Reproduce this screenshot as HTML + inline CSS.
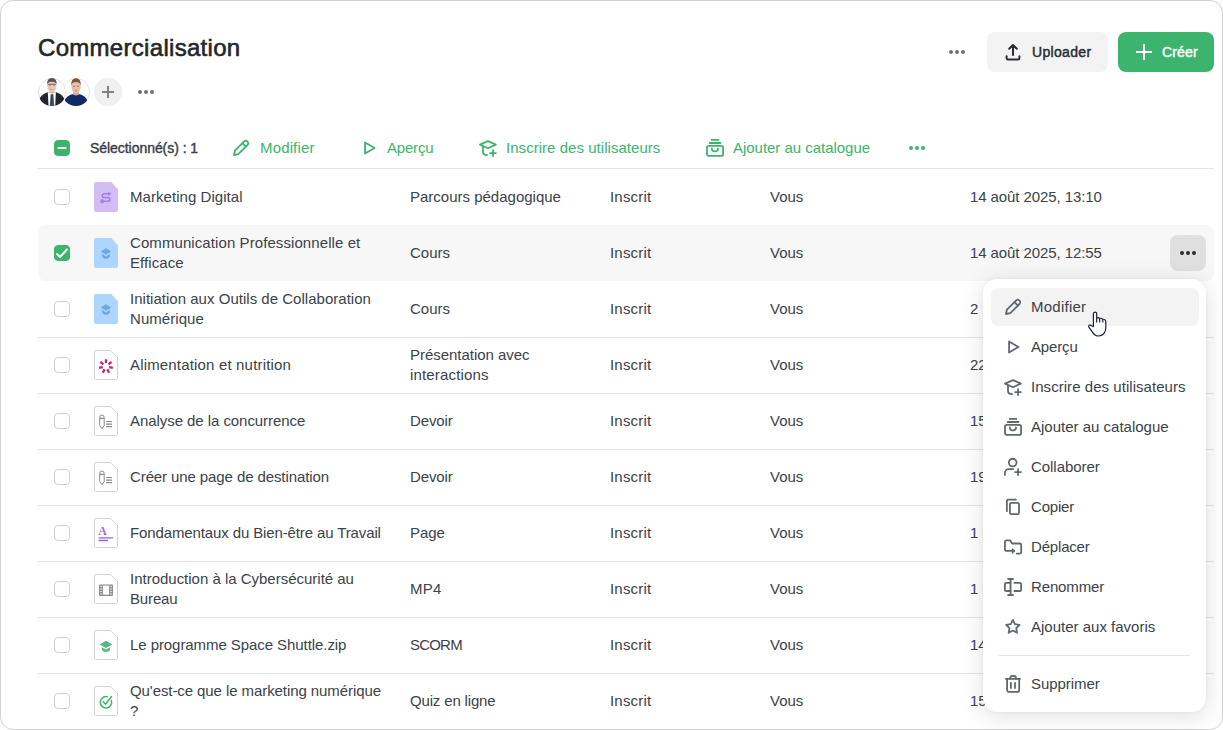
<!DOCTYPE html>
<html lang="fr">
<head>
<meta charset="utf-8">
<title>Commercialisation</title>
<style>
*{box-sizing:border-box;margin:0;padding:0}
html,body{width:1223px;height:730px;overflow:hidden;background:#fff}
body{font-family:"Liberation Sans",sans-serif;color:#3b424a;position:relative;font-size:15px}
.card{position:absolute;left:0;top:0;width:1223px;height:730px;border:1px solid #d2d2d2;border-radius:13px;background:#fff}
.abs{position:absolute}
h1{position:absolute;left:38px;top:33px;font-size:24px;line-height:30px;font-weight:400;color:#23272b;white-space:nowrap;letter-spacing:.3px;-webkit-text-stroke:.6px #23272b}
.dots{position:absolute;width:16px;height:4px}
.dots i{position:absolute;top:0;width:4px;height:4px;border-radius:50%;background:#6c737a}
.dots i:nth-child(1){left:0}.dots i:nth-child(2){left:6px}.dots i:nth-child(3){left:12px}
.btn{position:absolute;top:32px;height:40px;border-radius:8px;font-weight:400;-webkit-text-stroke:.45px currentColor;font-size:14px;line-height:40px;white-space:nowrap}
.btn span{position:absolute;top:0}
.up{left:987px;width:121px;background:#f3f3f3;color:#2a2e33}
.cr{left:1118px;width:96px;background:#3cb46e;color:#fff}
.av{position:absolute;top:78px;width:28px;height:28px;border-radius:50%;overflow:hidden}
.tb{position:absolute;top:128px;left:38px;width:1176px;height:41px;border-bottom:1px solid #e3e3e3}
.tb .t{position:absolute;top:0;line-height:40px;white-space:nowrap}
.g{color:#3cb46e}
.row{position:absolute;left:38px;width:1176px;height:56px}
.row.b{border-top:1px solid #e3e3e3}
.row.b>*{margin-top:-1px}
.row.sel{background:#f7f7f7;border-radius:8px}
.cb{position:absolute;left:16px;top:20px;width:16px;height:16px;border:1px solid #cfcfcf;border-radius:4px;background:#fff}
.c{position:absolute;top:0;height:56px;display:flex;align-items:center;line-height:20px}
.c1{left:92px;width:262px;white-space:nowrap}.c2{left:372px;width:190px;white-space:nowrap}.c3{left:572px;letter-spacing:.2px}.c4{left:732px}.c5{left:932px;white-space:nowrap;letter-spacing:-.09px}
.ic{position:absolute;left:56px;top:13px}
.cb.on{background:#3cb46e;border-color:#3cb46e}
.cb svg{position:absolute;left:-1px;top:-1px}
.menu{position:absolute;left:983px;top:280px;width:223px;height:432px}
.menu:before{content:"";position:absolute;left:0;top:-.6px;width:223px;height:432.200px;background:#fff;border-radius:14px;box-shadow:0 4px 24px rgba(0,0,0,.13),0 0 4px rgba(0,0,0,.05)}
.mi{position:absolute;left:8px;width:208px;height:38px;border-radius:8px}
.mi.h{background:#f3f3f3}
.mi .t{position:absolute;left:40px;top:0;line-height:38px;white-space:nowrap;color:#3b424a}
.mi svg{position:absolute;left:12px;top:9px;color:#606870}
.gd i{background:#3cb46e}
.dk i{background:#2a2e33}
.sep{position:absolute;left:16px;width:191px;top:375px;height:1px;background:#e3e3e3}
</style>
</head>
<body>
<div class="card"></div>
<h1>Commercialisation</h1>
<div class="dots" style="left:949px;top:50px"><i></i><i></i><i></i></div>
<div class="btn up"><span style="left:45px;letter-spacing:.33px">Uploader</span></div>
<div class="btn cr"><span style="left:44px;letter-spacing:.15px">Créer</span></div>
<div class="dots" style="left:138px;top:90px"><i></i><i></i><i></i></div>
<!--HEAD-ICONS-->
<svg class="abs" style="left:62px;top:78px" width="28" height="28" viewBox="0 0 28 28"><defs><clipPath id="c2"><circle cx="14" cy="14" r="14"/></clipPath></defs><circle cx="14" cy="14" r="13.500" fill="#fff" stroke="#e2e2e2"/><g clip-path="url(#c2)"><path d="M1.500 28c.300-6.500 3.500-10.600 9-11.700h7c5.500 1.100 8.700 5.200 9 11.700z" fill="#102a66"/><path d="M11.200 12h5.600v4.600c-1.600 1.300-4 1.300-5.600 0z" fill="#d7a98f"/><ellipse cx="14" cy="8.600" rx="4.700" ry="6.500" fill="#e6c0a9"/><path d="M9.200 7.600C8.900 2.600 11 .200 14 .200s5.100 2.400 4.800 7.400c-.600-2.500-1.800-3.700-4.800-3.700S9.800 5.100 9.200 7.600z" fill="#7d573b"/><path d="M11.300 8.300h1.700M15 8.300h1.700" stroke="#6b4a3a" stroke-width=".800"/><path d="M12.600 12.300h2.800" stroke="#b98270" stroke-width=".700"/></g></svg>
<svg class="abs" style="left:38px;top:78px" width="28" height="28" viewBox="0 0 28 28"><defs><clipPath id="c1"><circle cx="14" cy="14" r="14"/></clipPath></defs><circle cx="14" cy="14" r="13.500" fill="#fff" stroke="#e2e2e2"/><g clip-path="url(#c1)"><path d="M0 28c.200-7 2.500-11.300 9.600-13.700h8.600c7.100 2.400 9.400 6.700 9.600 13.700z" fill="#23252d"/><path d="M9.800 14.200h8.100L17.200 28h-6.700z" fill="#fbfbfb"/><path d="M12.700 16.200h2.600l.900 11.800h-4.400z" fill="#3c4763"/><path d="M11.400 11h5v3.400l-2.500 1.600-2.500-1.600z" fill="#dbb29a"/><ellipse cx="13.900" cy="7.800" rx="4.600" ry="6.500" fill="#e8c8b5"/><path d="M9.100 6.500C8.900 2 11 .100 13.900.100s5 1.900 4.800 6.400c-.500-2-1.700-2.800-4.800-2.800s-4.300.800-4.800 2.800z" fill="#5b5550"/><path d="M9.700 6.300h8.400" stroke="#4d4846" stroke-width=".700"/><path d="M11.200 7.300h1.500M15.100 7.300h1.500" stroke="#7a5a4c" stroke-width=".700"/><path d="M12.400 11.500h3" stroke="#c39a88" stroke-width=".700"/></g></svg>
<div class="abs" style="left:94px;top:78px;width:28px;height:28px;border-radius:50%;background:#efefef"><svg width="28" height="28" viewBox="0 0 28 28"><path d="M8 14h12M14 8v12" stroke="#7c8288" stroke-width="2"/></svg></div>
<svg class="abs" style="left:1003px;top:42px;color:#2a2e33" width="20" height="20" viewBox="0 0 20 20"><g fill="none" stroke="currentColor" stroke-width="2" stroke-linecap="round" stroke-linejoin="round"><path d="M10 13V3.400M6.200 6.800L10 3l3.800 3.800"/><path d="M3.600 14.200v2a1.400 1.400 0 0 0 1.400 1.400h10a1.400 1.400 0 0 0 1.400-1.400v-2"/></g></svg>
<svg class="abs" style="left:1134px;top:42px" width="20" height="20" viewBox="0 0 20 20"><path d="M2 10h16M10 2v16" stroke="#fff" stroke-width="2"/></svg>
<!--/HEAD-ICONS-->
<!--TB-->
<div class="tb">
<span class="cb on" style="top:12px"><svg width="16" height="16" viewBox="0 0 16 16"><path d="M4.500 8h7" stroke="#fff" stroke-width="2" stroke-linecap="round"/></svg></span>
<span class="t" style="left:52px;font-size:14px;color:#3a3f45;-webkit-text-stroke:.4px #3a3f45;letter-spacing:-.05px">Sélectionné(s) : 1</span>
<svg width="20" height="20" viewBox="0 0 20 20" class="g" style="position:absolute;left:193px;top:10px"><g fill="none" stroke="currentColor" stroke-width="1.8" stroke-linecap="round" stroke-linejoin="round" transform="rotate(45 10 10)"><path d="M7.550 3.300a2.450 2.450 0 0 1 4.900 0V16.200L10 19.900 7.550 16.200z"/><path d="M7.550 5.500h4.900"/></g></svg>
<span class="t g" style="left:222px;letter-spacing:0.15px">Modifier</span>
<svg width="20" height="20" viewBox="0 0 20 20" class="g" style="position:absolute;left:321px;top:10px"><path fill="none" stroke="currentColor" stroke-width="1.8" stroke-linecap="round" stroke-linejoin="round" d="M6.050 4.500v11L15.500 10z"/></svg>
<span class="t g" style="left:349px;letter-spacing:-0.2px">Aperçu</span>
<svg width="20" height="20" viewBox="0 0 20 20" class="g" style="position:absolute;left:440px;top:10px"><g fill="none" stroke="currentColor" stroke-width="1.8" stroke-linecap="round" stroke-linejoin="round"><path d="M9.950 3.100L2 6.650l7.950 3.550 7.950-3.550z"/><path d="M5 8.300v5.900c0 1.600 1.700 2.700 4.100 2.900"/><path d="M15 12.200v5.800M12.100 15.100h5.800"/></g></svg>
<span class="t g" style="left:468px;letter-spacing:0.04px">Inscrire des utilisateurs</span>
<svg width="20" height="20" viewBox="0 0 20 20" class="g" style="position:absolute;left:667px;top:10px"><g fill="none" stroke="currentColor" stroke-width="1.8" stroke-linecap="round" stroke-linejoin="round"><path d="M6.700 1.900h6.700M4.700 5h10.700"/><rect x="2" y="7.800" width="16.100" height="10.100" rx="1.700"/><path d="M6.900 10.400v.500a2.500 2.500 0 0 0 2.500 2.500h1.050a2.500 2.500 0 0 0 2.500-2.500v-.500"/></g></svg>
<span class="t g" style="left:695px;letter-spacing:-0.03px">Ajouter au catalogue</span>
<div class="dots gd" style="left:871px;top:18px"><i></i><i></i><i></i></div>
</div>
<!--/TB-->
<!--ROWS-->
<div class="row " style="top:169px"><span class="cb"></span><svg class="ic" width="24" height="30" viewBox="0 0 24 30"><path d="M2 0h15.200L24 7.200V28a2 2 0 0 1-2 2H2a2 2 0 0 1-2-2V2a2 2 0 0 1 2-2z" fill="#d2bcf1"/><g fill="none" stroke="#a67ce9" stroke-width="1.500" stroke-linecap="round" stroke-linejoin="round"><path d="M14.800 11.800H10.300a1.900 1.900 0 0 0 0 3.800h3.700a1.850 1.850 0 0 1 0 3.700H9.400"/><circle cx="8.100" cy="19.300" r="1.250"/></g><path d="M14.300 9.700l3 2.100-3 2.100z" fill="#a67ce9"/></svg><div class="c c1"><div><span style="letter-spacing:0.05px">Marketing Digital</span></div></div><div class="c c2"><div><span style="letter-spacing:0px">Parcours pédagogique</span></div></div><div class="c c3">Inscrit</div><div class="c c4">Vous</div><div class="c c5">14 août 2025, 13:10</div></div>
<div class="row sel" style="top:225px"><span class="cb on"><svg width="16" height="16" viewBox="0 0 16 16"><path d="M3.100 9.100l2.900 2.900 6.900-7.500" fill="none" stroke="#fff" stroke-width="2" stroke-linecap="round" stroke-linejoin="round"/></svg></span><svg class="ic" width="24" height="30" viewBox="0 0 24 30"><path d="M2 0h15.200L24 7.200V28a2 2 0 0 1-2 2H2a2 2 0 0 1-2-2V2a2 2 0 0 1 2-2z" fill="#aed5fb"/><path d="M12 10.200l5.200 3.300-5.200 3.200-5.200-3.200z" fill="#6ca7e8"/><path d="M8.100 16.100L12 18.500l3.900-2.400v2.300c-.900 1.500-2.300 2.300-3.900 2.300s-3-.800-3.900-2.300z" fill="#6ca7e8"/></svg><div class="c c1"><div><span style="letter-spacing:0.085px">Communication Professionnelle et</span><br><span style="letter-spacing:0.09px">Efficace</span></div></div><div class="c c2"><div><span style="letter-spacing:0px">Cours</span></div></div><div class="c c3">Inscrit</div><div class="c c4">Vous</div><div class="c c5">14 août 2025, 12:55</div></div>
<div class="row " style="top:281px"><span class="cb"></span><svg class="ic" width="24" height="30" viewBox="0 0 24 30"><path d="M2 0h15.200L24 7.200V28a2 2 0 0 1-2 2H2a2 2 0 0 1-2-2V2a2 2 0 0 1 2-2z" fill="#aed5fb"/><path d="M12 10.200l5.200 3.300-5.200 3.200-5.200-3.200z" fill="#6ca7e8"/><path d="M8.100 16.100L12 18.500l3.900-2.400v2.300c-.900 1.500-2.300 2.300-3.900 2.300s-3-.800-3.900-2.300z" fill="#6ca7e8"/></svg><div class="c c1"><div><span style="letter-spacing:0.02px">Initiation aux Outils de Collaboration</span><br><span style="letter-spacing:0.05px">Numérique</span></div></div><div class="c c2"><div><span style="letter-spacing:0px">Cours</span></div></div><div class="c c3">Inscrit</div><div class="c c4">Vous</div><div class="c c5">2 mai 2025, 11:02</div></div>
<div class="row b" style="top:337px"><span class="cb"></span><svg class="ic" width="24" height="30" viewBox="0 0 24 30"><path d="M2.500 .500h14.200L23.500 7.300V27.500a2 2 0 0 1-2 2h-19a2 2 0 0 1-2-2v-25a2 2 0 0 1 2-2z" fill="#fff" stroke="#d2d2d2"/><path d="M11.95 13.10L11.95 9.30M14.53 14.34L17.50 11.97M15.17 17.13L18.87 17.98M13.38 19.37L15.03 22.80M10.52 19.37L8.87 22.80M8.73 17.13L5.03 17.98M9.37 14.34L6.40 11.97" stroke="#c2256c" stroke-width="2.300" fill="none"/></svg><div class="c c1"><div><span style="letter-spacing:0.17px">Alimentation et nutrition</span></div></div><div class="c c2"><div><span style="letter-spacing:-0.035px">Présentation avec</span><br><span style="letter-spacing:0.16px">interactions</span></div></div><div class="c c3">Inscrit</div><div class="c c4">Vous</div><div class="c c5">22 juil. 2025, 10:41</div></div>
<div class="row b" style="top:393px"><span class="cb"></span><svg class="ic" width="24" height="30" viewBox="0 0 24 30"><path d="M2.500 .500h14.200L23.500 7.300V27.500a2 2 0 0 1-2 2h-19a2 2 0 0 1-2-2v-25a2 2 0 0 1 2-2z" fill="#fff" stroke="#d2d2d2"/><g fill="none" stroke="#878c93" stroke-width="1"><path d="M5.700 11.300a2.250 2.250 0 0 1 4.500 0v8.200l-2.250 3.300-2.250-3.300z"/><path d="M5.700 12.400h4.500" stroke-width="1.300"/><path d="M12.100 15.500h6M12.100 18.100h6M12.100 20.600h6" stroke-width="1.200"/></g></svg><div class="c c1"><div><span style="letter-spacing:-0.06px">Analyse de la concurrence</span></div></div><div class="c c2"><div><span style="letter-spacing:-0.1px">Devoir</span></div></div><div class="c c3">Inscrit</div><div class="c c4">Vous</div><div class="c c5">15 juil. 2025, 16:20</div></div>
<div class="row b" style="top:449px"><span class="cb"></span><svg class="ic" width="24" height="30" viewBox="0 0 24 30"><path d="M2.500 .500h14.200L23.500 7.300V27.500a2 2 0 0 1-2 2h-19a2 2 0 0 1-2-2v-25a2 2 0 0 1 2-2z" fill="#fff" stroke="#d2d2d2"/><g fill="none" stroke="#878c93" stroke-width="1"><path d="M5.700 11.300a2.250 2.250 0 0 1 4.500 0v8.200l-2.250 3.300-2.250-3.300z"/><path d="M5.700 12.400h4.500" stroke-width="1.300"/><path d="M12.100 15.500h6M12.100 18.100h6M12.100 20.600h6" stroke-width="1.200"/></g></svg><div class="c c1"><div><span style="letter-spacing:-0.1px">Créer une page de destination</span></div></div><div class="c c2"><div><span style="letter-spacing:-0.1px">Devoir</span></div></div><div class="c c3">Inscrit</div><div class="c c4">Vous</div><div class="c c5">19 juin 2025, 09:15</div></div>
<div class="row b" style="top:505px"><span class="cb"></span><svg class="ic" width="24" height="30" viewBox="0 0 24 30"><path d="M2.500 .500h14.200L23.500 7.300V27.500a2 2 0 0 1-2 2h-19a2 2 0 0 1-2-2v-25a2 2 0 0 1 2-2z" fill="#fff" stroke="#d2d2d2"/><text x="4.300" y="16.600" font-family="Liberation Serif,serif" font-weight="700" font-size="11.800" fill="#a36ddb">A</text><path d="M4.600 19.900h14.400M4.600 22.500h9.500" stroke="#9b5fd6" stroke-width="1.300"/></svg><div class="c c1"><div><span style="letter-spacing:-0.12px">Fondamentaux du Bien-être au Travail</span></div></div><div class="c c2"><div><span style="letter-spacing:-0.1px">Page</span></div></div><div class="c c3">Inscrit</div><div class="c c4">Vous</div><div class="c c5">1 mai 2025, 14:37</div></div>
<div class="row b" style="top:561px"><span class="cb"></span><svg class="ic" width="24" height="30" viewBox="0 0 24 30"><path d="M2.500 .500h14.200L23.500 7.300V27.500a2 2 0 0 1-2 2h-19a2 2 0 0 1-2-2v-25a2 2 0 0 1 2-2z" fill="#fff" stroke="#d2d2d2"/><rect x="5" y="10.400" width="14" height="11.500" rx=".800" fill="#8a8e94"/><rect x="8.900" y="11.600" width="6.200" height="9.100" fill="#fff"/><g fill="#dcdddf"><rect x="6.100" y="11.800" width="1.800" height="1.300"/><rect x="6.100" y="14.300" width="1.800" height="1.300"/><rect x="6.100" y="16.800" width="1.800" height="1.300"/><rect x="6.100" y="19.300" width="1.800" height="1.300"/><rect x="16.100" y="11.800" width="1.800" height="1.300"/><rect x="16.100" y="14.300" width="1.800" height="1.300"/><rect x="16.100" y="16.800" width="1.800" height="1.300"/><rect x="16.100" y="19.300" width="1.800" height="1.300"/></g></svg><div class="c c1"><div><span style="letter-spacing:-0.01px">Introduction à la Cybersécurité au</span><br><span style="letter-spacing:-0.15px">Bureau</span></div></div><div class="c c2"><div><span style="letter-spacing:0.2px">MP4</span></div></div><div class="c c3">Inscrit</div><div class="c c4">Vous</div><div class="c c5">1 mai 2025, 12:08</div></div>
<div class="row b" style="top:617px"><span class="cb"></span><svg class="ic" width="24" height="30" viewBox="0 0 24 30"><path d="M2.500 .500h14.200L23.500 7.300V27.500a2 2 0 0 1-2 2h-19a2 2 0 0 1-2-2v-25a2 2 0 0 1 2-2z" fill="#fff" stroke="#d2d2d2"/><path d="M12 10.700l6.200 3.700-6.200 3.600-6.200-3.600z" fill="#57b883"/><path d="M7.900 17.300L12 19.500l4-2.200v2.800c-1 1.300-2.400 2-4 2s-3.100-.700-4.100-2z" fill="#57b883"/></svg><div class="c c1"><div><span style="letter-spacing:-0.07px">Le programme Space Shuttle.zip</span></div></div><div class="c c2"><div><span style="letter-spacing:-0.8px">SCORM</span></div></div><div class="c c3">Inscrit</div><div class="c c4">Vous</div><div class="c c5">14 mai 2025, 17:45</div></div>
<div class="row b" style="top:673px"><span class="cb"></span><svg class="ic" width="24" height="30" viewBox="0 0 24 30"><path d="M2.500 .500h14.200L23.500 7.300V27.500a2 2 0 0 1-2 2h-19a2 2 0 0 1-2-2v-25a2 2 0 0 1 2-2z" fill="#fff" stroke="#d2d2d2"/><g fill="none" stroke="#3fb46f" stroke-width="1.500" stroke-linecap="round" stroke-linejoin="round"><path d="M17.340 14.480A5.700 5.700 0 1 1 13.600 10.850"/><path d="M9.300 15.900l2.300 2.300 5.900-7.700"/></g></svg><div class="c c1"><div><span style="letter-spacing:-0.08px">Qu'est-ce que le marketing numérique</span><br><span style="letter-spacing:0px">?</span></div></div><div class="c c2"><div><span style="letter-spacing:-0.16px">Quiz en ligne</span></div></div><div class="c c3">Inscrit</div><div class="c c4">Vous</div><div class="c c5">15 avr. 2025, 08:30</div></div>
<!--/ROWS-->
<!--OVER-->
<div class="abs" style="left:1170px;top:235px;width:36px;height:36px;border-radius:8px;background:#e0e0e0"><div class="dots dk" style="left:10px;top:16px"><i></i><i></i><i></i></div></div>
<!--/OVER-->
<!--MENU-->
<div class="menu">
<div class="mi h" style="top:8px"><svg width="20" height="20" viewBox="0 0 20 20" ><g fill="none" stroke="currentColor" stroke-width="1.8" stroke-linecap="round" stroke-linejoin="round" transform="rotate(45 10 10)"><path d="M7.550 3.300a2.450 2.450 0 0 1 4.900 0V16.200L10 19.900 7.550 16.200z"/><path d="M7.550 5.500h4.900"/></g></svg><span class="t" style="letter-spacing:0.25px">Modifier</span></div>
<div class="mi" style="top:48px"><svg width="20" height="20" viewBox="0 0 20 20" ><path fill="none" stroke="currentColor" stroke-width="1.8" stroke-linecap="round" stroke-linejoin="round" d="M6.050 4.500v11L15.500 10z"/></svg><span class="t" style="letter-spacing:-0.14px">Aperçu</span></div>
<div class="mi" style="top:88px"><svg width="20" height="20" viewBox="0 0 20 20" ><g fill="none" stroke="currentColor" stroke-width="1.8" stroke-linecap="round" stroke-linejoin="round"><path d="M9.950 3.100L2 6.650l7.950 3.550 7.950-3.550z"/><path d="M5 8.300v5.900c0 1.600 1.700 2.700 4.100 2.900"/><path d="M15 12.200v5.800M12.100 15.100h5.800"/></g></svg><span class="t" style="letter-spacing:0.045px">Inscrire des utilisateurs</span></div>
<div class="mi" style="top:128px"><svg width="20" height="20" viewBox="0 0 20 20" ><g fill="none" stroke="currentColor" stroke-width="1.8" stroke-linecap="round" stroke-linejoin="round"><path d="M6.700 1.900h6.700M4.700 5h10.700"/><rect x="2" y="7.800" width="16.100" height="10.100" rx="1.700"/><path d="M6.900 10.400v.500a2.500 2.500 0 0 0 2.500 2.500h1.050a2.500 2.500 0 0 0 2.500-2.500v-.500"/></g></svg><span class="t" style="letter-spacing:0px">Ajouter au catalogue</span></div>
<div class="mi" style="top:168px"><svg width="20" height="20" viewBox="0 0 20 20" ><g fill="none" stroke="currentColor" stroke-width="1.8" stroke-linecap="round" stroke-linejoin="round"><circle cx="9.700" cy="5.600" r="3.850"/><path d="M1.900 17.900v-1.900a3.800 3.800 0 0 1 3.800-3.800h4.400"/><path d="M15 12.200v5.800M12.100 15.100h5.800"/></g></svg><span class="t" style="letter-spacing:-0.05px">Collaborer</span></div>
<div class="mi" style="top:208px"><svg width="20" height="20" viewBox="0 0 20 20" ><g fill="none" stroke="currentColor" stroke-width="1.8" stroke-linecap="round" stroke-linejoin="round"><rect x="6.900" y="5.900" width="9.100" height="11.200" rx="1.400"/><path d="M3.850 14.200V4a1.300 1.300 0 0 1 1.300-1.300H12.900"/></g></svg><span class="t" style="letter-spacing:-0.2px">Copier</span></div>
<div class="mi" style="top:248px"><svg width="20" height="20" viewBox="0 0 20 20" ><g fill="none" stroke="currentColor" stroke-width="1.8" stroke-linecap="round" stroke-linejoin="round"><path d="M11.200 13.950H3.450a1.500 1.500 0 0 1-1.500-1.500V4.900a1.500 1.500 0 0 1 1.500-1.500h3.700l1.900 3.100h7.650a1.500 1.500 0 0 1 1.500 1.500v7.200a1.500 1.500 0 0 1-1.500 1.500h-3"/><path d="M9.400 11.900l2 2.050-2 2.050z" fill="currentColor" stroke-width="1.200"/></g></svg><span class="t" style="letter-spacing:-0.18px">Déplacer</span></div>
<div class="mi" style="top:288px"><svg width="20" height="20" viewBox="0 0 20 20" ><g fill="none" stroke="currentColor" stroke-width="1.8" stroke-linecap="round" stroke-linejoin="round"><path d="M7.550 2v16M5.100 2h4.900M5.100 18h4.900"/><path d="M7.550 5.800H3.200a1.300 1.300 0 0 0-1.300 1.300v5.600a1.300 1.300 0 0 0 1.300 1.300h4.350"/><path d="M11.400 5.800h5.450a1.300 1.300 0 0 1 1.300 1.300v5.600a1.300 1.300 0 0 1-1.300 1.300H11.400"/></g></svg><span class="t" style="letter-spacing:-0.14px">Renommer</span></div>
<div class="mi" style="top:328px"><svg width="20" height="20" viewBox="0 0 20 20" ><path fill="none" stroke="currentColor" stroke-width="1.8" stroke-linecap="round" stroke-linejoin="round" d="M9.85 2.90 L11.94 7.13 L16.60 7.81 L13.23 11.10 L14.02 15.74 L9.85 13.55 L5.68 15.74 L6.47 11.10 L3.10 7.81 L7.76 7.13z"/></svg><span class="t" style="letter-spacing:0px">Ajouter aux favoris</span></div>
<div class="mi" style="top:385px"><svg width="20" height="20" viewBox="0 0 20 20" ><g fill="none" stroke="currentColor" stroke-width="1.8" stroke-linecap="round" stroke-linejoin="round"><path d="M2.800 4.800h14.300"/><path d="M7.150 4.800V4a2 2 0 0 1 2-2h1.800a2 2 0 0 1 2 2v.800"/><path d="M4.100 4.800v11.100a2 2 0 0 0 2 2h8.100a2 2 0 0 0 2-2V4.800"/><path d="M7.900 8.800v5.200M12 8.800v5.200"/></g></svg><span class="t" style="letter-spacing:-0.06px">Supprimer</span></div>
<div class="sep"></div>
</div>
<!--/MENU-->
<!--CURSOR-->
<svg class="abs" style="left:1086px;top:310px" width="22" height="28" viewBox="1086 310 22 28"><path d="M1093.400 326.600V313.700a1.650 1.650 0 0 1 3.300 0V317.900c1-.500 2.300-.300 2.900.500 1-.300 2.400 0 3.100.900 1.400-.200 3.100.600 3.100 2.400v6.300c0 4.600-3 8-7.300 8-2.600 0-4.200-1.300-5.500-3.200l-4.100-5.600c-.900-1.300.600-2.900 2-2 .800.500 1.700 1.100 2.500 1.400z" fill="#fff" stroke="#1b1f38" stroke-width="1.200" stroke-linejoin="round"/><path d="M1096.700 317.900v4.600M1099.700 318.600v3.900M1102.800 319.400v3.100" stroke="#1b1f38" stroke-width="1.200" fill="none"/></svg>
<!--/CURSOR-->
</body>
</html>
